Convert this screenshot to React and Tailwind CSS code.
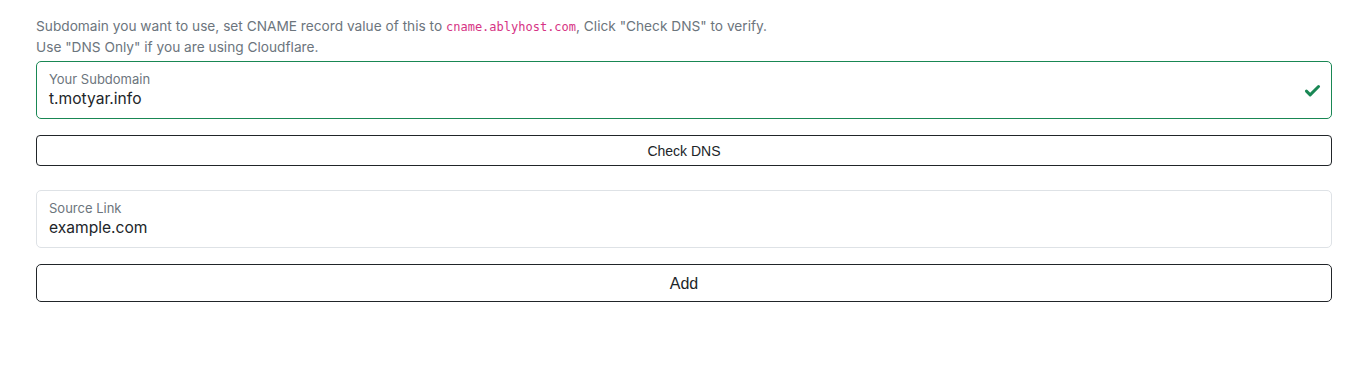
const FloatingInput = ({ label, value, valid }) => (
  <div
    className={`relative h-[58px] rounded-[5px] border bg-white px-3 pt-[8px] ${
      valid ? 'border-[#198754]' : 'border-[#dee2e6]'
    }`}
  >
    <div className="text-[13px] leading-[18px] text-[#6c757d]">{label}</div>
    <div className="text-[15.6px] leading-[22px] text-[#212529]">{value}</div>
    {valid && (
      <svg
        viewBox="0 0 16 16"
        className="absolute right-[10px] top-[20px] h-[17px] w-[17px]"
      >
        <path
          d="M2.3 8.6 5.8 12.1 13.7 4.2"
          fill="none"
          stroke="#198754"
          strokeWidth="2.8"
          strokeLinecap="round"
          strokeLinejoin="round"
        />
      </svg>
    )}
  </div>
)

export default function App() {
  return (
    <div className="min-h-[369px] bg-white px-[36px] pt-[16px] font-['Inter',sans-serif]">
      <div className="w-[1296px]">
        <p className="text-[13.7px] leading-[21px] text-[#6c757d]">
          Subdomain you want to use, set CNAME record value of this to{' '}
          <code className="font-['DejaVu_Sans_Mono',monospace] text-[12px] leading-none text-[#d63384]">
            cname.ablyhost.com
          </code>
          , Click "Check DNS" to verify.
          <br />
          Use "DNS Only" if you are using Cloudflare.
        </p>

        <div className="mt-[3px]">
          <FloatingInput label="Your Subdomain" value="t.motyar.info" valid />
        </div>

        <button className="mt-[16px] flex h-[31px] w-full items-center justify-center rounded-[4px] border border-[#212529] bg-white pt-px font-['Liberation_Sans',sans-serif] text-[14px] text-[#212529]">
          Check DNS
        </button>

        <div className="mt-[24px]">
          <FloatingInput label="Source Link" value="example.com" />
        </div>

        <button className="mt-[16px] flex h-[38px] w-full items-center justify-center rounded-[5px] border border-[#212529] bg-white pt-px font-['Liberation_Sans',sans-serif] text-[16px] text-[#212529]">
          Add
        </button>
      </div>
    </div>
  )
}
